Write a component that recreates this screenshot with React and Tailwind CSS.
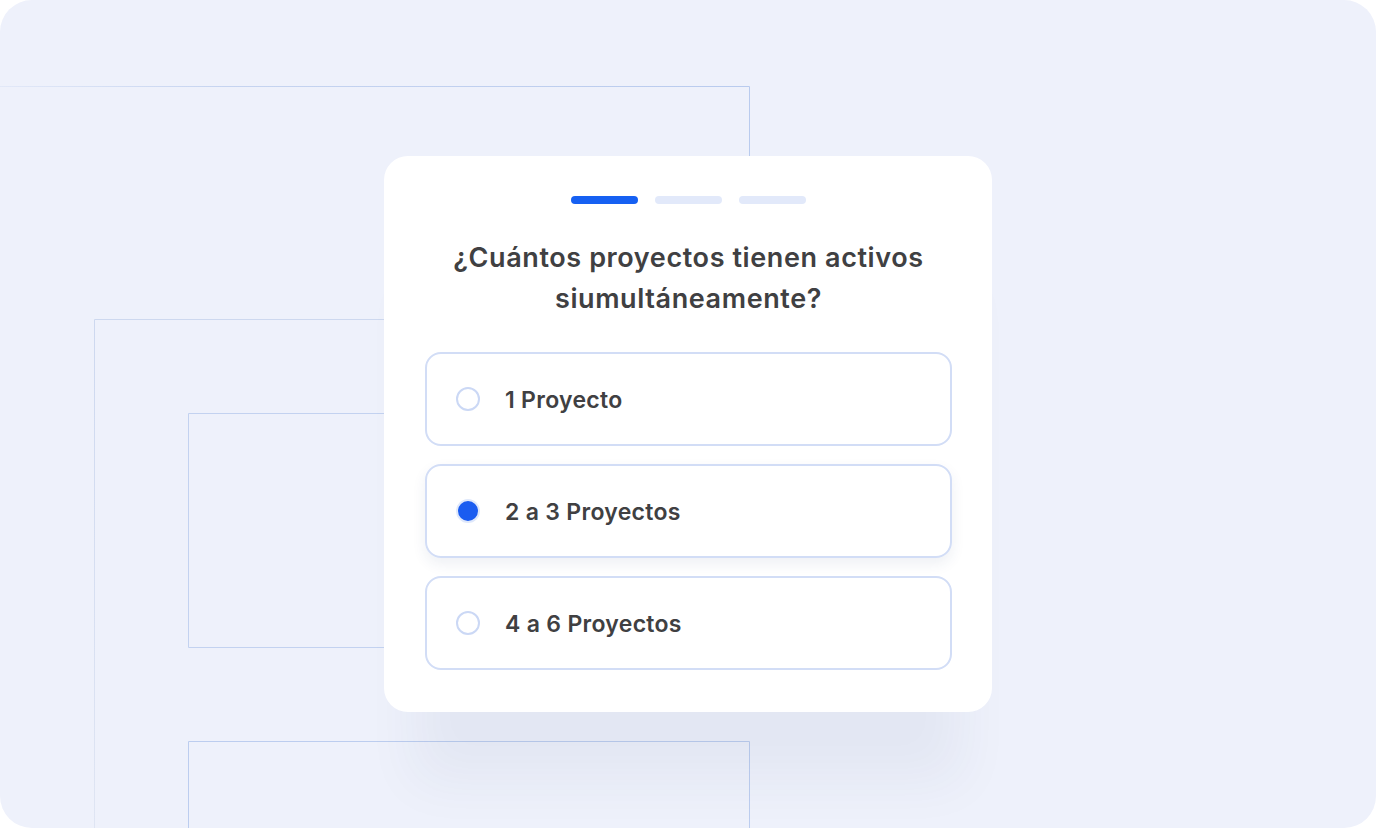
const options = [
  { label: "1 Proyecto", selected: false },
  { label: "2 a 3 Proyectos", selected: true },
  { label: "4 a 6 Proyectos", selected: false },
];

function Backdrop() {
  // decorative frame lines behind the card
  return (
    <svg className="absolute inset-0 w-full h-full" viewBox="0 0 1376 828" fill="none">
      <defs>
        <linearGradient id="fadeTop" x1="0" y1="0" x2="749" y2="0" gradientUnits="userSpaceOnUse">
          <stop offset="0" stopColor="#c6d4f0" stopOpacity="0.3" />
          <stop offset="0.3" stopColor="#c6d4f0" stopOpacity="1" />
          <stop offset="1" stopColor="#b9cbee" />
        </linearGradient>
        <linearGradient id="fadeDown" x1="0" y1="319" x2="0" y2="828" gradientUnits="userSpaceOnUse">
          <stop offset="0" stopColor="#cdd8ef" />
          <stop offset="1" stopColor="#dfe5f3" />
        </linearGradient>
      </defs>
      <path d="M0 86.5H749.5V160" stroke="url(#fadeTop)" />
      <path d="M94.5 828V319.5H390" stroke="url(#fadeDown)" />
      <path d="M390 413.5H188.5V647.5H390" stroke="#c3d2f0" />
      <path d="M188.5 828V741.5H749.5V828" stroke="#bccdef" />
    </svg>
  );
}

export default function App() {
  return (
    <div className="w-full h-[828px] bg-white" style={{ fontFamily: "Inter, 'Noto Sans', sans-serif" }}>
      <div className="relative w-full h-full rounded-[32px] bg-[#eef1fb] overflow-hidden flex justify-center">
        <Backdrop />
        <div className="relative mt-[156px] w-[608px] h-[556px] bg-white rounded-[24px] pl-[41px] pr-[40px] pt-[40px] shadow-[0_100px_50px_-30px_rgba(40,50,90,0.05)] flex flex-col">
          <div className="flex justify-center gap-[17px]">
            <div className="w-[67px] h-[8px] rounded-full bg-[#1660f2]" />
            <div className="w-[67px] h-[8px] rounded-full bg-[#e2e9fa]" />
            <div className="w-[67px] h-[8px] rounded-full bg-[#e2e9fa]" />
          </div>
          <h1 className="mt-[33px] text-center text-[27px] leading-[41px] font-semibold text-[#404042] tracking-[0.6px]">
            ¿Cuántos proyectos tienen activos
            <br />
            siumultáneamente?
          </h1>
          <div className="mt-[33px] flex flex-col gap-[18px]">
            {options.map((o) => (
              <div
                key={o.label}
                className={`h-[94px] rounded-[16px] border-2 border-[#d2ddf6] flex items-center pl-[29px] gap-[25px] ${
                  o.selected ? "shadow-[0_6px_14px_rgba(40,60,120,0.08)]" : ""
                }`}
              >
                {o.selected ? (
                  <div className="w-[24px] h-[24px] rounded-full bg-[#1a5cf0] border-2 border-[#dfe8fb]" />
                ) : (
                  <div className="w-[24px] h-[24px] rounded-full border-2 border-[#cbd8f5]" />
                )}
                <span className="text-[23px] font-semibold text-[#404042] tracking-[0.3px] pt-[2px]">{o.label}</span>
              </div>
            ))}
          </div>
        </div>
      </div>
    </div>
  );
}
